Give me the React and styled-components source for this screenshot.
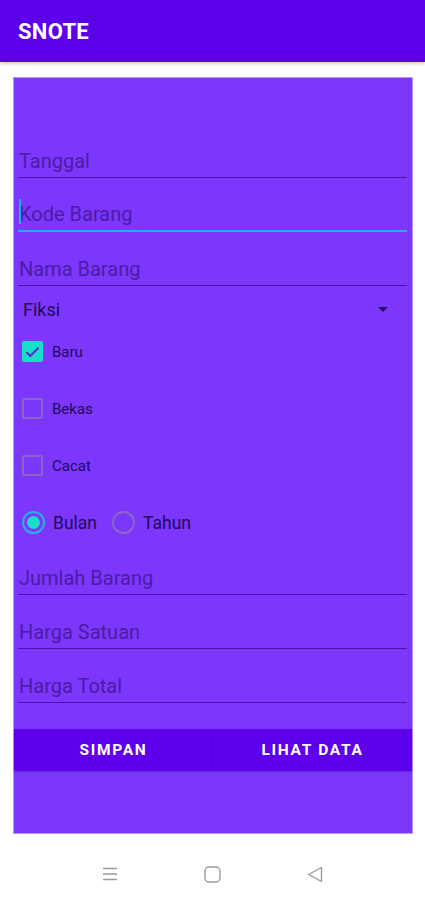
import React, { useState } from "react";
import styled, { createGlobalStyle } from "styled-components";

const GlobalStyle = createGlobalStyle`
  body {
    margin: 0;
    background: #ffffff;
    font-family: Roboto, "Liberation Sans", sans-serif;
  }
`;

const Screen = styled.div`
  width: 425px;
  height: 900px;
  display: flex;
  flex-direction: column;
  background: #ffffff;
`;

const AppBar = styled.div`
  height: 62px;
  background: #5c00e9;
  display: flex;
  align-items: center;
  padding-left: 18px;
  box-shadow: 0 2px 3px rgba(0, 0, 0, 0.18);
  color: #ffffff;
  font-size: 22px;
  font-weight: 700;
  letter-spacing: 0.3px;
`;

const Panel = styled.div`
  box-sizing: border-box;
  margin: 15px 12px 0 13px;
  height: 757px;
  background: #7d36fb;
  border: 1px solid #b994ff;
  padding-top: 46px;
  display: flex;
  flex-direction: column;
`;

const Field = styled.div`
  box-sizing: border-box;
  height: ${p => p.h || 54}px;
  margin: 0 5px 0 4px;
  display: flex;
  align-items: flex-end;
  padding-bottom: 4px;
  border-bottom: ${p => (p.focused ? "2px solid #27b0e8" : "1px solid #4a14ab")};
  position: relative;
`;

const Placeholder = styled.span`
  font-size: 20px;
  line-height: 24px;
  color: #4b1ca3;
  padding-left: 1px;
`;

const Cursor = styled.span`
  position: absolute;
  left: 1px;
  bottom: 6px;
  width: 2px;
  height: 25px;
  background: #27b0e8;
`;

const Spinner = styled.div`
  box-sizing: border-box;
  height: 37px;
  padding: 9px 24px 0 9px;
  display: flex;
  align-items: center;
  justify-content: space-between;
  font-size: 18px;
  color: #220b58;
`;

const Arrow = styled.span`
  width: 0;
  height: 0;
  border-left: 5px solid transparent;
  border-right: 5px solid transparent;
  border-top: 5px solid #2a0d63;
`;

const OptionRow = styled.label`
  height: 57px;
  display: flex;
  align-items: center;
  padding-left: 8px;
  gap: ${p => p.gap || 9}px;
  cursor: pointer;
`;

const Box = styled.span`
  box-sizing: border-box;
  width: 21px;
  height: 21px;
  border-radius: 2px;
  background: ${p => (p.checked ? "#1bdcc8" : "transparent")};
  border: ${p => (p.checked ? "none" : "2px solid #8c66c4")};
  display: flex;
  align-items: center;
  justify-content: center;
`;

const OptionText = styled.span`
  font-size: ${p => p.size || 15}px;
  color: #230a5c;
`;

const Radio = styled.span`
  box-sizing: border-box;
  width: 23px;
  height: 23px;
  border-radius: 50%;
  border: 2px solid ${p => (p.checked ? "#27b0e8" : "#8c66c4")};
  display: flex;
  align-items: center;
  justify-content: center;
  margin-left: ${p => p.offset || 0}px;

  &::after {
    content: "";
    width: 13px;
    height: 13px;
    border-radius: 50%;
    background: ${p => (p.checked ? "#1bdcc8" : "transparent")};
  }
`;

const Buttons = styled.div`
  margin-top: 26px;
  display: flex;
`;

const Button = styled.button`
  flex: 1;
  height: 42px;
  border: none;
  background: #5e00ec;
  color: #ffffff;
  font-family: Roboto, "Liberation Sans", sans-serif;
  font-size: 15.5px;
  font-weight: 700;
  letter-spacing: 1.7px;
  box-shadow: 0 1px 2px rgba(0, 0, 0, 0.2);
`;

const NavBar = styled.div`
  flex: 1;
  display: flex;
  align-items: center;
  justify-content: center;
  gap: 86px;
  padding-top: 14px;
`;

const options = ["Baru", "Bekas", "Cacat"];

const App = () => {
  const [checked, setChecked] = useState({ Baru: true, Bekas: false, Cacat: false });
  const [period, setPeriod] = useState("Bulan");

  return (
    <Screen>
      <GlobalStyle />
      <AppBar>SNOTE</AppBar>
      <Panel>
        <Field>
          <Placeholder>Tanggal</Placeholder>
        </Field>
        <Field focused>
          <Cursor />
          <Placeholder>Kode Barang</Placeholder>
        </Field>
        <Field>
          <Placeholder>Nama Barang</Placeholder>
        </Field>
        <Spinner>
          Fiksi
          <Arrow />
        </Spinner>
        {options.map(o => (
          <OptionRow key={o} onClick={() => setChecked({ ...checked, [o]: !checked[o] })}>
            <Box checked={checked[o]}>
              {checked[o] && (
                <svg width="15" height="12" viewBox="0 0 15 12">
                  <path d="M1.5 6.2 L5.3 10 L13.5 1.8" fill="none" stroke="#5b2ad0" strokeWidth="2" />
                </svg>
              )}
            </Box>
            <OptionText>{o}</OptionText>
          </OptionRow>
        ))}
        <OptionRow gap={8}>
          <Radio checked={period === "Bulan"} onClick={() => setPeriod("Bulan")} offset={0} />
          <OptionText size={17.5}>Bulan</OptionText>
          <Radio checked={period === "Tahun"} onClick={() => setPeriod("Tahun")} offset={7} />
          <OptionText size={17.5}>Tahun</OptionText>
        </OptionRow>
        <Field h={44}>
          <Placeholder>Jumlah Barang</Placeholder>
        </Field>
        <Field>
          <Placeholder>Harga Satuan</Placeholder>
        </Field>
        <Field>
          <Placeholder>Harga Total</Placeholder>
        </Field>
        <Buttons>
          <Button>SIMPAN</Button>
          <Button>LIHAT DATA</Button>
        </Buttons>
      </Panel>
      <NavBar>
        <svg width="16" height="14" viewBox="0 0 16 14">
          <path d="M1 1.5 H15 M1 7 H15 M1 12.5 H15" stroke="#9a9a9a" strokeWidth="1.4" />
        </svg>
        <svg width="17" height="17" viewBox="0 0 17 17">
          <rect x="1" y="1" width="15" height="15" rx="4" fill="none" stroke="#9a9a9a" strokeWidth="1.4" />
        </svg>
        <svg width="16" height="17" viewBox="0 0 16 17">
          <path d="M14.5 1.5 L1.5 8.5 L14.5 15.5 Z" fill="none" stroke="#9a9a9a" strokeWidth="1.4" strokeLinejoin="round" />
        </svg>
      </NavBar>
    </Screen>
  );
};

export default App;
